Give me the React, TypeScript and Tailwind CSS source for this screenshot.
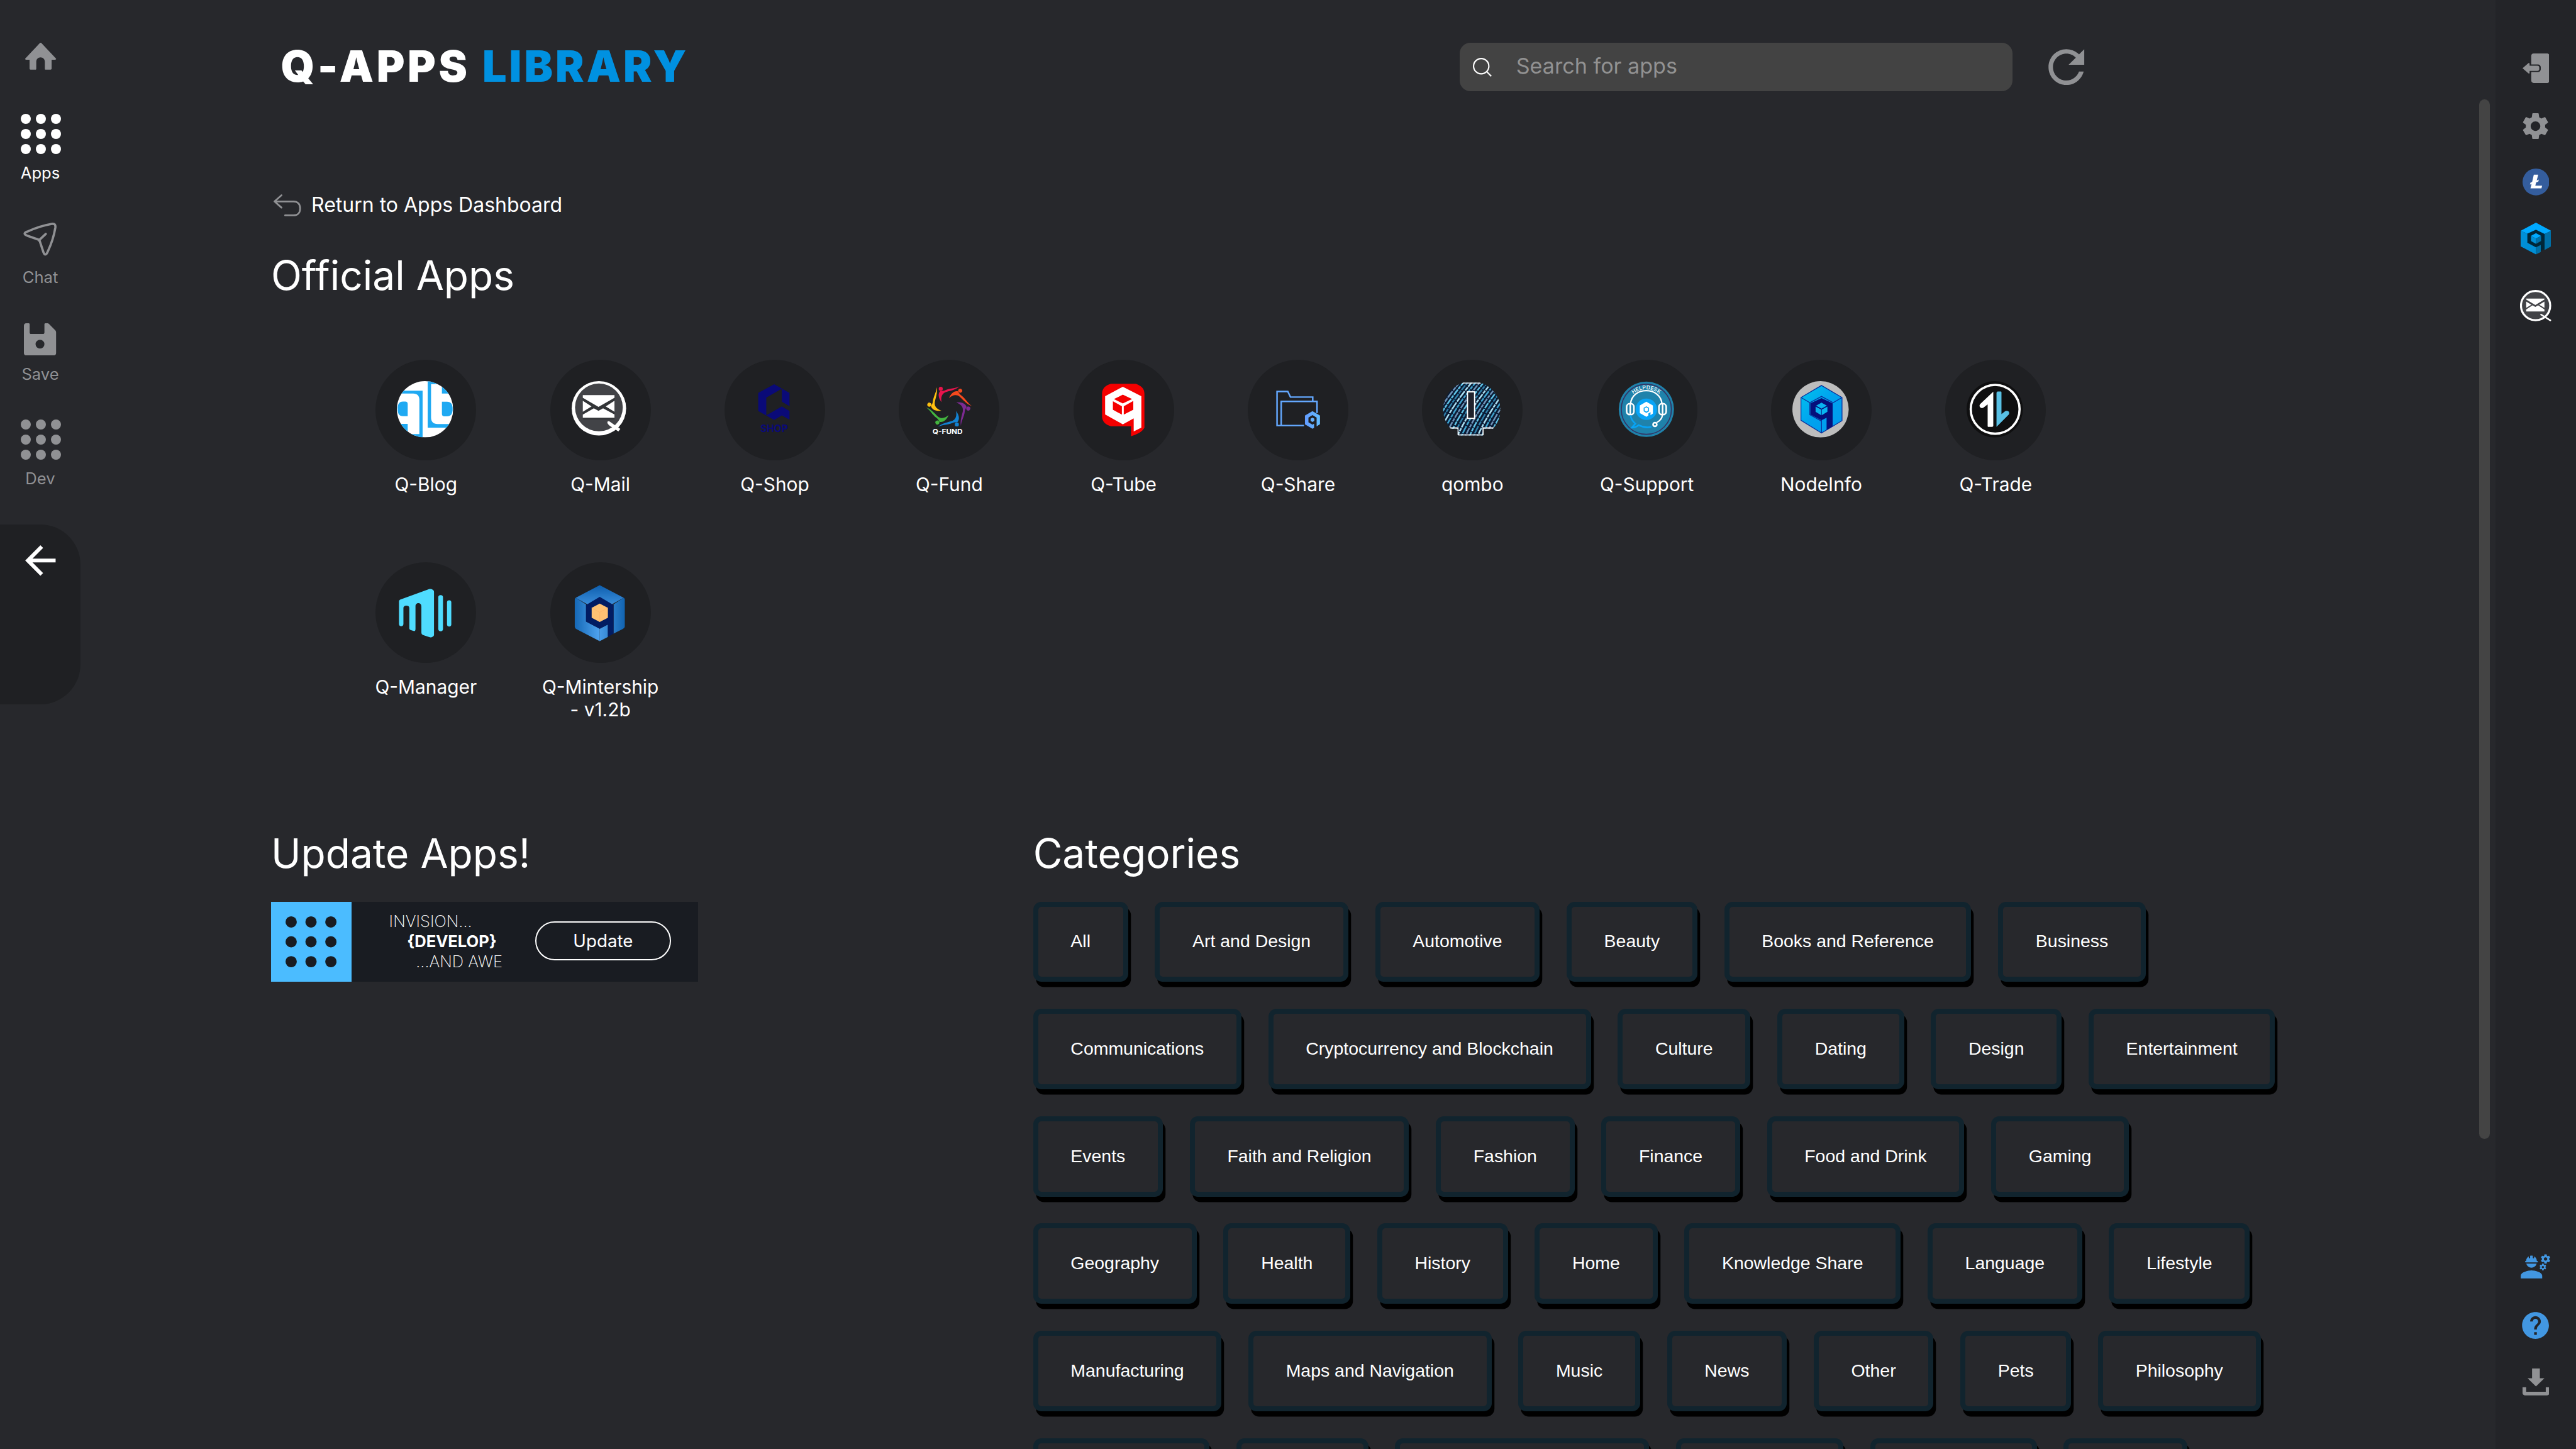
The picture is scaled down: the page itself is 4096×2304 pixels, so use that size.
import type { ReactNode } from "react";
import { MdArrowBack, MdEngineering, MdHelp, MdRefresh, MdSettings } from "react-icons/md";

/* ---------- sidebar icons ---------- */

const HomeIcon = () => (
  <svg viewBox="0 0 24 20" className="w-[24px] h-[20px]" fill="#909194">
    <path d="M11.3.35a.95.95 0 0 1 1.4 0l10.6 11.2c.5.55.2 1.1-.5 1.1H20.2v6.6c0 .5-.3.75-.75.75h-3.7c-.4 0-.6-.25-.6-.6v-5.2c0-1.8-1.3-3.3-3.2-3.3s-3.2 1.5-3.2 3.3v5.2c0 .35-.2.6-.6.6H4.5c-.45 0-.75-.25-.75-.75v-6.6H1.2c-.7 0-1-.55-.5-1.1z" />
  </svg>
);

const DotGrid = ({ color, size, r, pitch }: { color: string; size: number; r: number; pitch: number }) => (
  <svg viewBox={`0 0 ${size} ${size}`} width={size} height={size} fill={color}>
    {[0, 1, 2].map((row) =>
      [0, 1, 2].map((col) => <circle key={`${row}${col}`} cx={r + col * pitch} cy={r + row * pitch} r={r} />),
    )}
  </svg>
);

const ChatIcon = () => (
  <svg viewBox="0 0 25 25" className="w-[25px] h-[25px]" fill="none" stroke="#909194" strokeWidth="1.7">
    <path d="M12 12.9 2.9 9.7C.4 8.7.4 7.7 2.9 6.7 9 4 15 2 21.2.95c2.3-.3 3 .5 2.7 2.8-1 6.3-3 12.2-5.8 18.2-1.1 2.4-2.2 2.4-3.1 0z" strokeLinejoin="round" />
    <path d="m11.6 13.3 5.2-4.9" strokeLinecap="round" />
  </svg>
);

const SaveIcon = () => (
  <svg viewBox="0 0 24 24" className="w-[24px] h-[24px]" fill="#909194">
    <path
      fillRule="evenodd"
      d="M1.8 0h1.6c.6 0 .9.3.9.9v6c0 .7.4 1.1 1.1 1.1h8.8c.7 0 1.1-.4 1.1-1.1v-6c0-.6.3-.9.9-.9h1c.7 0 1.2.2 1.7.7l4.4 4.5c.5.5.7 1 .7 1.7v15.200c0 1.200-.7 1.900-1.900 1.900H1.900C.7 24 0 23.300 0 22.100V1.900C0 .7.7 0 1.800 0zM12 12.300a3.300 3.300 0 1 0 0 6.600 3.300 3.300 0 0 0 0-6.600z"
    />
  </svg>
);

const LogoutIcon = () => (
  <svg viewBox="0 0 20 22" className="w-[20px] h-[22px]" fill="#909194">
    <path d="M8.300 0h9.900c1.100 0 1.800.7 1.800 1.800v18.400c0 1.100-.7 1.800-1.800 1.800H8.300c-1.100 0-1.800-.7-1.800-1.800v-6.400h5c1.200 0 2.100-.9 2.100-2.100v-1.400c0-1.200-.9-2.100-2.100-2.100h-5V1.800C6.500.7 7.200 0 8.300 0z" />
    <path d="M0 11 4.300 7.300c.5-.4.95-.2.95.4v1.400h5.800c.9 0 1.400.5 1.400 1.300v1.300c0 .8-.5 1.300-1.400 1.300H5.250v1.400c0 .6-.45.8-.95.4z" />
  </svg>
);

const LitecoinIcon = () => (
  <svg viewBox="0 0 20 20" className="w-[20px] h-[20px]">
    <circle cx="10" cy="10" r="10" fill="#345d9d" />
    <path fill="#fff" d="M8.400 4.600h3.300l-1.150 4.250 1.600-.6-.4 1.450-1.600.6-.65 2.500h5.100l-.5 2H5.900l.85-3.300-1.250.5.4-1.500 1.250-.5z" />
  </svg>
);

const QortalIcon = () => (
  <svg viewBox="0 0 22.800 23.800" className="w-[22.8px] h-[23.8px]">
    <path fill="#002638" d="M11.400 1 21 6v12l-9.600 5L2 18V6z" />
    <path fill="#00a9ff" d="M0 6.100 11.400 0l11.350 6.100-4.900 2.300-6.450-3.100L5 8.200z" />
    <path fill="#008fd6" d="M0 6.100 5 8.200V15l6.400 3.400v5.300L0 17.700z" />
    <path fill="#0070a8" d="m22.750 6.100-4.900 2.300v12l4.900-2.700zM11.400 18.400l3.600-1.700v5.200l-3.600 1.800z" />
    <path fill="#00a9ff" d="m11.400 7.900 3.800 1.900-3.800 2-3.700-2z" />
    <path fill="#008fd6" d="m7.700 9.800 3.700 2v4l-3.700-2.100z" />
    <path fill="#0070a8" d="m15.200 9.800-3.800 2v4l3.800-2.100z" />
  </svg>
);

const DownloadIcon = () => (
  <svg viewBox="0 0 20 20" className="w-[20px] h-[20px]" fill="#909194">
    <path d="M7.100 0h5.800v7.300h3.400L10 13.400 3.750 7.300H7.100z" />
    <path d="M0 14h2.700v3.300h14.600V14H20v4.300c0 1-.7 1.700-1.700 1.700H1.700C.7 20 0 19.300 0 18.300z" />
  </svg>
);

const ReturnIcon = () => (
  <svg viewBox="0 0 20.500 16.500" className="w-[20.5px] h-[16.5px]" fill="none" stroke="#909194" strokeWidth="1.300" strokeLinecap="round" strokeLinejoin="round">
    <path d="M5.900.7.7 5.300l5.200 4.600M.9 5.300h14c3 0 4.900 2 4.900 5.200 0 3.300-1.900 5.200-4.900 5.200H8.600" />
  </svg>
);

const SearchIcon = () => (
  <svg viewBox="0 0 14 14" className="w-[14px] h-[14px] shrink-0" fill="none" stroke="#fff">
    <circle cx="6.200" cy="6.200" r="5.700" />
    <path d="m10.200 10.200 3.500 3.500" />
  </svg>
);

/* ---------- app logos ---------- */

const BlogLogo = () => (
  <>
    <clipPath id="blog">
      <circle cx="21" cy="21" r="21" />
    </clipPath>
    <g clipPath="url(#blog)">
      <rect width="42" height="42" fill="#fff" />
      <g fill="#1fa9f2">
        <path d="M0 7.100h19.200V42H8v-2.500h8.800V14c0-3-1.600-4.700-4.600-4.700H0z" />
        <path d="M0 31.900h8.100V42H0z" />
        <path d="M.6 20.700c0-3.400 1-5.500 4-5.500h1.700c1.200 0 1.800.7 1.800 1.900v9H4.600c-3 0-4-2-4-5.400z" />
        <path d="M23 0h19v9.300h-8.400V2.200h-8.100V27c0 3.300 1.700 5 4.800 5H42v2.700H23z" />
        <path d="M33.600 15.300h3.800c3 0 4.200 2 4.200 5.500s-1.200 5.500-4.200 5.500h-2c-1.200 0-1.800-.7-1.800-1.900z" />
      </g>
    </g>
  </>
);

const MailLogo = () => (
  <>
    <circle cx="20.300" cy="20.300" r="20.300" fill="#fff" />
    <circle cx="20.300" cy="19.600" r="17.800" fill="#424347" />
    <path fill="#2c2d30" d="M8.300 12h23.600v16.600H8.300z" opacity=".7" />
    <g fill="#fff">
      <path d="M8.300 10.400h23.600v2L20 19.200 8.300 12.400zM8.300 14.600l6.500 4.300-6.500 4zM31.900 14.600l-6.500 4.300 6.500 4zM8.300 27.300V25l8.200-4.700L20 22.100l3.400-1.800 8.500 4.600v2.400z" />
      <path d="M26.700 30.200c.6-.5 1.500-.3 2.400.5l7.200 4.900-1.500 1.900-5-3.300c-2-1.200-3.600-2.700-3.100-4z" />
    </g>
  </>
);

const MailBadge = () => (
  <svg viewBox="0 0 23.300 23.600" className="w-[23.3px] h-[23.6px]">
    <circle cx="11.600" cy="11.700" r="10.900" fill="#424347" stroke="#fff" strokeWidth="1.500" />
    <path fill="#fff" d="M4.600 6.500h13.600v.7l-6.800 4.100-6.800-4.100zM4.600 8.700l3.900 2.300-3.900 2.400zM18.200 8.700 14.300 11l3.900 2.400zM4.600 16v-1.500l4.700-3 2.100 1.200 2.100-1.200 4.700 3V16z" />
    <path stroke="#fff" strokeWidth="1.200" strokeLinecap="round" d="m15.700 18.400 6.900 4.300" />
  </svg>
);

const ShopLogo = () => (
  <g fill="#0a0a78">
    <path d="m21.100 2.300 11.400 6.500v9.800l-5.700-3.200V5.600l-11.600 6.700v13.200l11.600-6.600 5.700 3.400v6.400l-5.700-3.200-5.700 3.400-11.900-6.600V8.800z" />
    <text x="10.800" y="38" fontSize="7.500" fontWeight="700" textLength="20.500" lengthAdjust="spacingAndGlyphs" fontFamily="Inter, sans-serif">
      SHOP
    </text>
  </g>
);

const fundColors = ["#e8144c", "#f5491d", "#7d2a92", "#1283d3", "#43b53f", "#fdc010"];
const FundLogo = () => (
  <>
    {fundColors.map((color, i) => (
      <g key={color} fill={color} transform={`rotate(${i * 60} 21.400 19)`}>
        <circle cx="15.400" cy="5.700" r="1.500" />
        <path d="M29.400 3.900c-3 1.700-7.200 1.400-10.400 2.800-1.200.6-2.300.7-3.900.6-2 2-1.500 5.300.9 8.400-.6-3.500 0-6.400 3.500-7.600C23.500 7 27 6.200 29.400 3.900z" />
      </g>
    ))}
    <text x="9.300" y="39.400" fill="#fff" fontSize="5" fontWeight="700" textLength="22.400" lengthAdjust="spacingAndGlyphs" fontFamily="Inter, sans-serif">
      Q-FUND
    </text>
  </>
);

const TubeLogo = () => (
  <>
    <path fill="#f50000" d="M12 2h18.500c4 1.500 6.400 3.500 6.400 7.500v25.200c-1.500 3-5.500 5.200-10 6.300v-7.400H12c-4-1-6.700-3.300-6.700-7.600V9.500C5.300 5.500 8 3 12 2z" />
    <path fill="#fff" d="m20.800 4.200 13.800 7.100v23.400l-5.700 2.800v-9.700l-8.100 4.400-13.200-7.300V11.200z" />
    <path fill="#f50000" d="m20.800 10.100 6.900 3.300-6.900 3.300-6.600-3.300zM13.400 15l6.700 3.700V25l-6.700-3.700zM28.600 14.800l-7.100 3.900V25l7.100-3.700z" />
  </>
);

const ShareLogo = () => (
  <>
    <linearGradient id="share" x1="0" y1="0" x2="1" y2="0">
      <stop offset="0" stopColor="#629bff" />
      <stop offset="1" stopColor="#63bdff" />
    </linearGradient>
    <g fill="none" stroke="#64a8ff" strokeWidth="1.150">
      <path d="M26 33.100H5.900V7.700h8l2 4.200h16.600v3.200" />
      <path d="M9 33.100v-18h26.700v8.700" />
    </g>
    <path fill="url(#share)" d="m32.300 22.400 5.600 3.300v6.400l-2.500 1.600v-6.500l-3.100-1.900-3 1.900v3.500l3 1.800 1.200-.7v3l-1.200.7-5.600-3.300v-6.500z" />
    <path fill="#64b0ff" d="m32.300 27.200 1.400.8v1.700l-1.400.8-1.400-.8V28z" />
  </>
);

const qomboStreaks = Array.from({ length: 22 }, (_, i) => i);
const QomboLogo = () => (
  <>
    <clipPath id="qombo">
      <path d="M5.500 35.500A21 21 0 0 1 15 1h12a21 21 0 0 1 10 34.500h-7V40q0 .5-.5.500h-18q-.9 0-.9-.9v-4.100z" />
    </clipPath>
    <g clipPath="url(#qombo)">
      <rect width="42" height="42" fill="#0a1a33" />
      <g strokeWidth="1.200" fill="none">
        {qomboStreaks.map((i) => (
          <path
            key={i}
            d={`M${i * 3 - 26} 42 Q${i * 3 - 16} 20 ${i * 3 + 1} 0`}
            stroke={["#5fc3e6", "#2f7fa8", "#a9def0", "#3fa4cf", "#6d93b8"][i % 5]}
            strokeDasharray={["4.500 .6 2.600 .6", "3 .5 6 .8", "2.500 .6 4.800 .6"][i % 3]}
          />
        ))}
      </g>
      <path d="M14 1h14" stroke="#fff" strokeWidth="1.400" />
      <path d="M4 35h6.800v5.200h18.900V35h8.300" stroke="#fff" strokeWidth="1" fill="none" />
    </g>
    <rect x="18" y="8" width="5.300" height="19.800" fill="#20222c" stroke="#fff" strokeWidth=".9" />
  </>
);

const SupportLogo = () => (
  <>
    <circle cx="21" cy="21" r="20.600" fill="#1f82ab" />
    <circle cx="21" cy="21" r="18.700" fill="none" stroke="#343463" strokeWidth=".8" />
    <path id="helpdesk" d="M9.500 11.500a15 15 0 0 1 23 0" fill="none" />
    <text fontSize="4" fill="#fff" fontWeight="500" fontFamily="Inter, sans-serif" textAnchor="middle">
      <textPath href="#helpdesk" startOffset="50%">
        HELPDESK
      </textPath>
    </text>
    <path d="M9.200 17c.5-6 5.400-9.900 11.700-9.900S32.100 11 32.700 17" fill="none" stroke="#fff" strokeWidth="1.100" />
    <path d="M33 25c-.2 3-1.800 4.600-4.300 5.900" fill="none" stroke="#fff" strokeWidth="1" />
    <g fill="none" stroke="#fff" strokeWidth="1.200">
      <rect x="6.300" y="16.800" width="5.400" height="8.200" rx="2.400" />
      <rect x="30.400" y="16.800" width="5.400" height="8.200" rx="2.400" />
      <path d="M9 17v8M33.100 17v8" />
      <circle cx="27.400" cy="32.300" r="1.400" />
    </g>
    <path d="M9.200 25.500c.4 3 1.600 4.500 3.600 6.200l-2.600 3c2.200 0 3.600-.8 5-1.900 3 1.600 6.500 2 9.600 1.300" fill="none" stroke="#08a4f7" strokeWidth="1.200" />
    <circle cx="21" cy="21" r="8" fill="#08a4f7" />
    <path fillRule="evenodd" fill="#fff" d="m21 15.400 4.900 2.800v5.900l-1.800 1.300v-2.300l-1.600 1v1.600l-1.500.9-4.900-2.800v-5.600zm0 3.300-2 1.200v2.600l2 1.200 2-1.200v-2.600z" />
    <path fill="#fff" d="m21 19.600 1.300.7v1.600l-1.300.8-1.300-.8v-1.600z" />
  </>
);

const NodeInfoLogo = () => (
  <>
    <linearGradient id="node" x1="0" y1="0" x2="1" y2="1">
      <stop offset="0" stopColor="#00c4ee" />
      <stop offset=".5" stopColor="#00a2ee" />
      <stop offset="1" stopColor="#009af0" />
    </linearGradient>
    <circle cx="21" cy="21" r="21" fill="#bdbdbd" />
    <path fill="url(#node)" stroke="#0b2f9c" strokeWidth=".6" d="m21.700 3.200 15.300 9v17.300l-15.300 9.200-15.300-9.500v-17z" />
    <path fill="none" stroke="#0b2f9c" strokeWidth=".6" d="m6.800 12.400 6.200 3.700 8.700-4.700 8.700 4.700 6.200-3.700M21.700 29v9.500M13 16v9l8.700 4.800" />
    <path fill="#05107c" d="m21.700 12.600 8.300 3.900v17.200l-4.500 2.800v-9.200l-3.800 1.900-8.300-4.300v-8.400z" />
    <path fill="#08b4f0" d="m21.700 16.100 4 2.200-4 2.200-4-2.200zM17.300 19l4.200 2.200v4.200l-4.200-2.500zM26.100 19l-4.200 2.200v4.200l4.200-2.500z" />
  </>
);

const TradeLogo = () => (
  <>
    <circle cx="21" cy="21" r="21" fill="#0f0f10" />
    <circle cx="21.300" cy="21" r="18.200" fill="none" stroke="#fff" strokeWidth="1.700" />
    <path fill="#fff" d="M19.900 7.800v25.700l-.6.600h-3c-.4 0-.6-.2-.6-.6V17.300l-3.200 2.500c-2 .9-3.700-.9-2.400-2.700z" />
    <path fill="#58c0e4" d="M22.300 34.100V8.500l.7-.8h2.400c.4 0 .6.200.6.700v16.200l2.800-2.200c1.900-1 3.800.6 2.600 2.600z" />
  </>
);

const ManagerLogo = () => (
  <g fill="#4fdcff">
    <path d="M1.600 13.300c0-.7.400-1.200 1.100-1.500L24.300 4c1.400-.3 3.400.6 3.400 2v32.200c0 1.200-1.900 2.100-3.200 1.800l-4.600-1.600c-1.100-.4-1.600-.9-1.600-2V17c0-3.200-4.400-3.200-4.400-.2v16.900c0 1.500-.6 1.900-1.800 1.500l-1.500-.5c-.9-.3-1.300-.8-1.300-1.700V18c0-2-4.400-2.200-4.400.3v11.800c0 2.200-3.300 2.200-3.300 0z" />
    <rect x="30.900" y="8.500" width="3.500" height="27" rx="1.700" />
    <rect x="37.400" y="12.400" width="3.200" height="19.600" rx="1.600" />
  </g>
);

const MintershipLogo = () => (
  <>
    <linearGradient id="mintTop" x1="0" y1="0" x2="0" y2="1">
      <stop offset="0" stopColor="#0e5fae" />
      <stop offset="1" stopColor="#489ce9" />
    </linearGradient>
    <linearGradient id="mintLeft" x1="0" y1="0" x2="1" y2="0">
      <stop offset="0" stopColor="#1568b6" />
      <stop offset="1" stopColor="#50a4f0" />
    </linearGradient>
    <linearGradient id="mintRight" x1="0" y1="0" x2="1" y2="0">
      <stop offset="0" stopColor="#489be8" />
      <stop offset="1" stopColor="#1163b0" />
    </linearGradient>
    <path fill="url(#mintTop)" d="M20.900 1.200 38.800 10.500l-18 10-17.800-10z" />
    <path fill="url(#mintLeft)" d="m3 10.500 7.700 5v12.800l10.200 5.300v9.300L3.700 34q-1.400-.7-1.400-1.800V12q0-1 .7-1.500z" />
    <path fill="url(#mintRight)" d="m38.800 10.500-7.600 5v21.800l7-3.600q1.400-.7 1.400-1.700V12q0-1-.8-1.500zM20.900 33.600l6.100-3.100v9.200l-6.100 3.200z" />
    <path fill="#021c62" d="m20.900 9.900 10.300 6v21.400L27 39.700v-9.200l-6.100 3.100-10.200-5.300V15.900z" />
    <path fill="#ffc273" d="m20.900 14.900 6.100 3.200v7.300l-6.100 3.200-6-3.200v-7.300z" />
    <path fill="none" stroke="#ffae63" strokeWidth=".3" d="m14.900 18.100 6 3.300 6.100-3.300M20.900 21.400v7.200" />
  </>
);

/* ---------- data ---------- */

const apps: { name: string; logo: ReactNode }[] = [
  { name: "Q-Blog", logo: <BlogLogo /> },
  { name: "Q-Mail", logo: <MailLogo /> },
  { name: "Q-Shop", logo: <ShopLogo /> },
  { name: "Q-Fund", logo: <FundLogo /> },
  { name: "Q-Tube", logo: <TubeLogo /> },
  { name: "Q-Share", logo: <ShareLogo /> },
  { name: "qombo", logo: <QomboLogo /> },
  { name: "Q-Support", logo: <SupportLogo /> },
  { name: "NodeInfo", logo: <NodeInfoLogo /> },
  { name: "Q-Trade", logo: <TradeLogo /> },
  { name: "Q-Manager", logo: <ManagerLogo /> },
  { name: "Q-Mintership - v1.2b", logo: <MintershipLogo /> },
];

const categories = [
  "All", "Art and Design", "Automotive", "Beauty", "Books and Reference", "Business",
  "Communications", "Cryptocurrency and Blockchain", "Culture", "Dating", "Design", "Entertainment",
  "Events", "Faith and Religion", "Fashion", "Finance", "Food and Drink", "Gaming",
  "Geography", "Health", "History", "Home", "Knowledge Share", "Language", "Lifestyle",
  "Manufacturing", "Maps and Navigation", "Music", "News", "Other", "Pets", "Philosophy",
  "Photography", "Politics", "Products and Services", "Productivity", "Psychology", "Qortal",
];

/* ---------- layout ---------- */

const NavItem = ({ label, active, children }: { label: string; active?: boolean; children: ReactNode }) => (
  <div className="flex flex-col items-center">
    {children}
    <span className={active ? "text-[12px] leading-[15px] text-white" : "text-[12px] leading-[15px] text-[#909194]"}>{label}</span>
  </div>
);

const LeftBar = () => (
  <aside className="flex w-[60px] shrink-0 flex-col items-center pt-[32px]">
    <div className="pl-px">
      <HomeIcon />
    </div>
    <div className="mt-[33px]">
      <NavItem label="Apps" active>
        <div className="mb-[6.5px] ml-px h-[30px]">
          <DotGrid color="#fff" size={30} r={3.75} pitch={11.25} />
        </div>
      </NavItem>
    </div>
    <div className="mt-[29.3px]">
      <NavItem label="Chat">
        <div className="mb-[8.4px] h-[25px]">
          <ChatIcon />
        </div>
      </NavItem>
    </div>
    <div className="mt-[26.9px]">
      <NavItem label="Save">
        <div className="mb-[6.4px] h-[24px]">
          <SaveIcon />
        </div>
      </NavItem>
    </div>
    <div className="mt-[26.3px]">
      <NavItem label="Dev">
        <div className="mb-[6.5px] ml-px h-[30px]">
          <DotGrid color="#909194" size={30} r={3.75} pitch={11.25} />
        </div>
      </NavItem>
    </div>
    <div className="mt-[26.7px] flex h-[134px] w-[60px] justify-center rounded-r-[30px] bg-[#1f2023] pt-[10px]">
      <MdArrowBack className="h-[34px] w-[34px] text-white" />
    </div>
  </aside>
);

const RightBar = () => (
  <aside className="flex w-[60px] shrink-0 flex-col items-center bg-[#232428] pb-[40px] pt-[40px]">
    <LogoutIcon />
    <MdSettings className="mt-[20px] h-[24px] w-[24px] text-[#909194]" />
    <div className="mt-[19.8px] h-[20px]">
      <LitecoinIcon />
    </div>
    <div className="mt-[20.2px] h-[24px]">
      <QortalIcon />
    </div>
    <div className="mt-[26px] h-[24px]">
      <MailBadge />
    </div>
    <MdEngineering className="mt-auto h-[24px] w-[24px] text-[#4297e2]" />
    <MdHelp className="mt-[20px] h-[24px] w-[24px] text-[#4297e2]" />
    <div className="mt-[20px] h-[20px]">
      <DownloadIcon />
    </div>
  </aside>
);

const Header = () => (
  <header className="flex h-[100px] shrink-0 items-center pl-[149.3px] pr-[300px]">
    <h1 className="-mt-px flex text-[32px] font-black leading-[40px] text-white">
      <span className="w-[150.2px] tracking-[2.2px]">Q-APPS</span>
      <span className="tracking-[1.9px] text-[#0091e1]">LIBRARY</span>
    </h1>
    <div className="ml-auto flex h-[36px] w-[412px] items-center rounded-[8px] bg-[#434343] pl-[10px]">
      <SearchIcon />
      <span className="-mt-px ml-[18px] text-[16px] leading-[20px] text-[#929292]">Search for apps</span>
    </div>
    <MdRefresh className="ml-[20px] h-[40px] w-[40px] text-[#909194]" />
  </header>
);

const UpdateBanner = () => (
  <div className="flex h-[60px] w-[318.2px] bg-[#191c22] text-white">
    <div className="flex h-[60px] w-[60px] items-center justify-center bg-[#4bbcff]">
      <DotGrid color="#191c22" size={38} r={4.2} pitch={14.8} />
    </div>
    <div className="w-[137px] pl-[28px] pt-[7.5px] text-[12px] font-extralight leading-[15px]">
      <div>INVISION...</div>
      <div className="pl-[13.4px] font-bold">{"{DEVELOP}"}</div>
      <div className="pl-[20px]">...AND AWE</div>
    </div>
    <div className="mt-[15px] flex h-[29px] w-[101px] items-center justify-center rounded-full border border-white text-[13px] leading-[16px]">
      Update
    </div>
  </div>
);

export default function App() {
  return (
    <div className="h-[2304px] w-[4096px] overflow-hidden bg-[#27282c]">
      <div className="flex h-[1080px] w-[1920px] overflow-hidden bg-[#27282c] font-['Inter',sans-serif] [zoom:2.133333]">
        <LeftBar />

        <main className="flex h-[1080px] min-w-0 flex-1 flex-col overflow-hidden">
          <Header />

          <div className="mt-[43px] flex h-[20px] shrink-0 items-center pl-[144px] text-[15px] leading-[20px] text-white">
            <ReturnIcon />
            <span className="ml-[7.6px]">Return to Apps Dashboard</span>
          </div>

          <h2 className="mt-[22px] pl-[142px] text-[30px] leading-[40px] text-white">Official Apps</h2>

          <div className="ml-[197.5px] mt-[43px] grid w-[1290px] shrink-0 auto-rows-[151px] grid-cols-10 gap-x-[10px]">
            {apps.map((app) => (
              <div key={app.name} className="flex flex-col items-center">
                <div className="flex h-[75px] w-[75px] items-center justify-center rounded-full bg-[#1f2023] pb-px pr-px">
                  <svg viewBox="0 0 42 42" className="h-[42px] w-[42px] overflow-visible">
                    {app.logo}
                  </svg>
                </div>
                <p className="mt-[9.5px] w-[90px] text-center text-[14px] leading-[17px] text-white">{app.name}</p>
              </div>
            ))}
          </div>

          <div className="mt-[46px] flex shrink-0 pl-[142px]">
            <section className="w-[568px]">
              <h2 className="mb-[16px] text-[30px] leading-[40px] text-white">Update Apps!</h2>
              <UpdateBanner />
            </section>
            <section className="w-[940px]">
              <h2 className="mb-[16px] text-[30px] leading-[40px] text-white">Categories</h2>
              <div className="flex flex-wrap gap-[20px]">
                {categories.map((name) => (
                  <button
                    key={name}
                    className="h-[60px] rounded-[6px] border-4 border-[#11242e] bg-[#27282c] px-[24.25px] pb-px font-['Liberation_Sans',Arial,sans-serif] text-[13.333px] leading-[16px] text-white shadow-[2px_4px_0_0_#000]"
                  >
                    {name}
                  </button>
                ))}
              </div>
            </section>
          </div>
        </main>

        <div className="-ml-[12px] w-[12px] shrink-0 pt-[74px]">
          <div className="h-[774.8px] w-[8px] rounded-full bg-[#444444]" />
        </div>
        <RightBar />
      </div>
    </div>
  );
}
